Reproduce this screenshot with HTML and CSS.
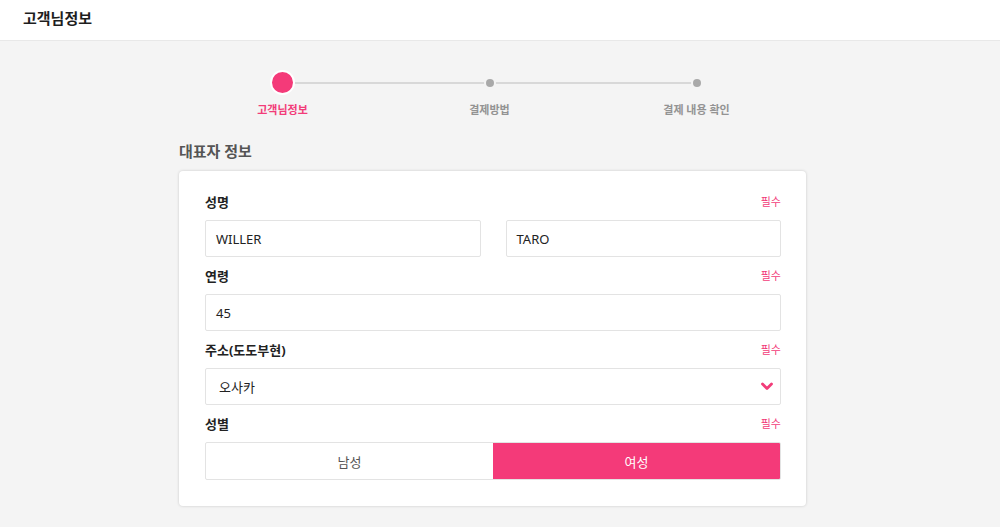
FILE: index.html
```html
<!DOCTYPE html>
<html lang="ko">
<head>
<meta charset="utf-8">
<title>고객님정보</title>
<link rel="stylesheet" href="styles.css">
</head>
<body>
<header class="topbar">
  <h1 class="topbar-title">고객님정보</h1>
</header>
<main class="page">
  <div class="wrap">
    <ol class="stepper">
      <li class="step step-active">
        <span class="step-dot"></span>
        <span class="step-label">고객님정보</span>
      </li>
      <li class="step">
        <span class="step-dot"></span>
        <span class="step-label">결제방법</span>
      </li>
      <li class="step step-last">
        <span class="step-dot"></span>
        <span class="step-label">결제 내용 확인</span>
      </li>
    </ol>

    <h2 class="section-title">대표자 정보</h2>

    <section class="card">
      <div class="field">
        <div class="field-head"><span class="field-label">성명</span><span class="req">필수</span></div>
        <div class="name-row">
          <div class="input">WILLER</div>
          <div class="input">TARO</div>
        </div>
      </div>
      <div class="field">
        <div class="field-head"><span class="field-label">연령</span><span class="req">필수</span></div>
        <div class="input">45</div>
      </div>
      <div class="field">
        <div class="field-head"><span class="field-label">주소(도도부현)</span><span class="req">필수</span></div>
        <div class="input select">
          <span>오사카</span>
          <svg class="chev" width="12" height="9" viewBox="0 0 12 9"><path d="M1.5 2 L6 6.5 L10.5 2" fill="none" stroke="#f23c79" stroke-width="2.8" stroke-linecap="round" stroke-linejoin="round"/></svg>
        </div>
      </div>
      <div class="field">
        <div class="field-head"><span class="field-label">성별</span><span class="req">필수</span></div>
        <div class="toggle">
          <div class="toggle-btn">남성</div>
          <div class="toggle-btn toggle-on">여성</div>
        </div>
      </div>
    </section>
  </div>
</main>
</body>
</html>
```

FILE: styles.css
```css
* { box-sizing: border-box; }
html, body { margin: 0; padding: 0; }
body {
  background: #f4f4f4;
  font-family: "Noto Sans", "Noto Sans CJK KR", sans-serif;
  color: #222;
  height: 527px;
  overflow: hidden;
}
.topbar {
  height: 41px;
  background: #fff;
  border-bottom: 1px solid #e8e8e8;
  display: flex;
  align-items: center;
  padding-left: 23px;
}
.topbar-title {
  margin: 0;
  font-size: 15px;
  font-weight: 700;
  color: #1e1e1e;
  line-height: 20px;
  padding-bottom: 4px;
}
.page { padding-top: 31px; }
.wrap {
  width: 627px;
  margin-left: 179px;
}
.stepper {
  list-style: none;
  margin: 0;
  padding: 0;
  display: grid;
  grid-template-columns: repeat(3, 207px);
}
.step {
  position: relative;
  display: flex;
  flex-direction: column;
  align-items: center;
}
.step::after {
  content: "";
  position: absolute;
  top: 10px;
  left: 50%;
  width: 207px;
  height: 2px;
  background: #d8d8d8;
  z-index: 0;
}
.step-last::after { display: none; }
.step-dot {
  position: relative;
  z-index: 1;
  width: 21px;
  height: 21px;
  display: flex;
  align-items: center;
  justify-content: center;
}
.step-dot::before {
  content: "";
  flex: none;
  width: 8px;
  height: 8px;
  border-radius: 50%;
  background: #a9a9a9;
  box-shadow: 0 0 0 2px #f4f4f4;
}
.step-active .step-dot::before {
  width: 21px;
  height: 21px;
  background: #f43a79;
  border: 2px solid #fff;
  box-shadow: none;
}
.step-label {
  margin-top: 9px;
  font-size: 11px;
  line-height: 16px;
  font-weight: 700;
  color: #939393;
}
.step-active .step-label { color: #f23c79; }

.section-title {
  margin: 22px 0 9px;
  font-size: 15px;
  line-height: 22px;
  font-weight: 700;
  color: #555;
}
.card {
  background: #fff;
  border-radius: 4px;
  box-shadow: 0 0 3px rgba(0,0,0,0.18);
  padding: 22px 25px 26px 26px;
  display: flex;
  flex-direction: column;
  gap: 10px;
}
.field-head {
  display: flex;
  justify-content: space-between;
  align-items: center;
  height: 20px;
  margin-bottom: 7px;
}
.field-label {
  font-size: 13px;
  font-weight: 700;
  color: #222;
  line-height: 18px;
  margin-top: -2px;
}
.req {
  font-size: 11px;
  color: #f23c79;
  margin-top: -4px;
}
.name-row {
  display: grid;
  grid-template-columns: 1fr 1fr;
  gap: 25px;
}
.input {
  height: 37px;
  border: 1px solid #e3e3e3;
  border-radius: 2px;
  padding: 0 11px 0 10px;
  display: flex;
  align-items: center;
  font-size: 13px;
  color: #222;
}
.select { justify-content: space-between; padding-right: 7px; padding-left: 13px; }
.chev { display: block; }
.toggle {
  display: grid;
  grid-template-columns: 1fr 1fr;
  height: 38px;
  border: 1px solid #e3e3e3;
  border-radius: 2px;
  overflow: hidden;
}
.toggle-btn {
  display: flex;
  align-items: center;
  justify-content: center;
  font-size: 13px;
  color: #555;
}
.toggle-on {
  background: #f43a79;
  color: #fff;
}
```
